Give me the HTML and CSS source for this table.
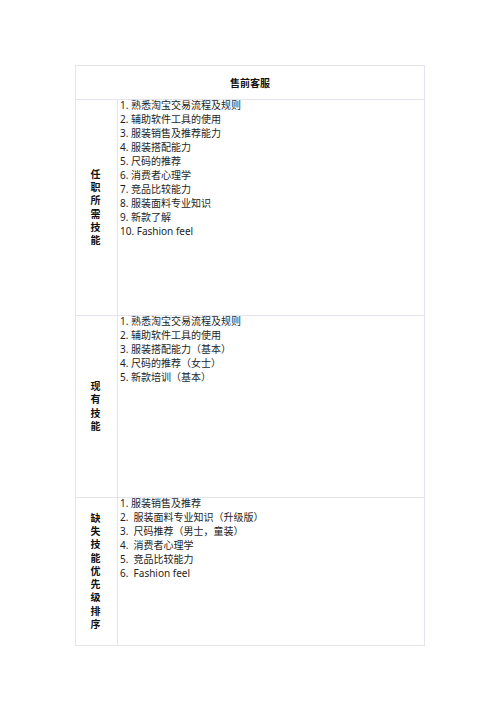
FILE: index.html
```html
<!DOCTYPE html>
<html lang="zh">
<head>
<meta charset="utf-8">
<link rel="stylesheet" href="styles.css">
</head>
<body>
<div class="page">
  <div class="sheet">
    <div class="head">售前客服</div>
    <div class="row r1">
      <div class="label">任<br>职<br>所<br>需<br>技<br>能</div>
      <div class="items">
        <div>1. 熟悉淘宝交易流程及规则</div>
        <div>2. 辅助软件工具的使用</div>
        <div>3. 服装销售及推荐能力</div>
        <div>4. 服装搭配能力</div>
        <div>5. 尺码的推荐</div>
        <div>6. 消费者心理学</div>
        <div>7. 竞品比较能力</div>
        <div>8. 服装面料专业知识</div>
        <div>9. 新款了解</div>
        <div>10. Fashion feel</div>
      </div>
    </div>
    <div class="row r2">
      <div class="label">现<br>有<br>技<br>能</div>
      <div class="items">
        <div>1. 熟悉淘宝交易流程及规则</div>
        <div>2. 辅助软件工具的使用</div>
        <div>3. 服装搭配能力（基本）</div>
        <div>4. 尺码的推荐（女士）</div>
        <div>5. 新款培训（基本）</div>
      </div>
    </div>
    <div class="row r3">
      <div class="label">缺<br>失<br>技<br>能<br>优<br>先<br>级<br>排<br>序</div>
      <div class="items pre">
        <div>1. 服装销售及推荐</div>
        <div>2.  服装面料专业知识（升级版）</div>
        <div>3.  尺码推荐（男士，童装）</div>
        <div>4.  消费者心理学</div>
        <div>5.  竞品比较能力</div>
        <div>6.  Fashion feel</div>
      </div>
    </div>
  </div>
</div>
</body>
</html>
```

FILE: styles.css
```css
html, body {
  margin: 0;
  padding: 0;
  background: #ffffff;
}
.page {
  padding: 65px 0 0 75px;
  font-family: "Noto Sans", "Noto Sans CJK SC", sans-serif;
  font-size: 10px;
  color: #1e1e1e;
}
.sheet {
  width: 348px;
  border: 1px solid #e4e4ec;
}
.head {
  height: 33px;
  display: flex;
  align-items: center;
  justify-content: center;
  font-weight: bold;
  border-bottom: 1px solid #e4e4ec;
  color: #111;
}
.row {
  display: grid;
  grid-template-columns: 42px 1fr;
  border-bottom: 1px solid #e4e4ec;
}
.row:last-child {
  border-bottom: none;
}
.r1 { height: 215px; }
.r2 { height: 181px; }
.r3 { height: 147px; }
.label {
  border-right: 1px solid #e4e4ec;
  display: flex;
  align-items: center;
  justify-content: center;
  text-align: center;
  font-weight: bold;
  line-height: 13.2px;
  color: #111;
  padding-right: 2px;
}
.items {
  margin-top: -2px;
  padding: 0 0 0 2px;
  line-height: 14px;
}
.pre div {
  white-space: pre;
}
```
